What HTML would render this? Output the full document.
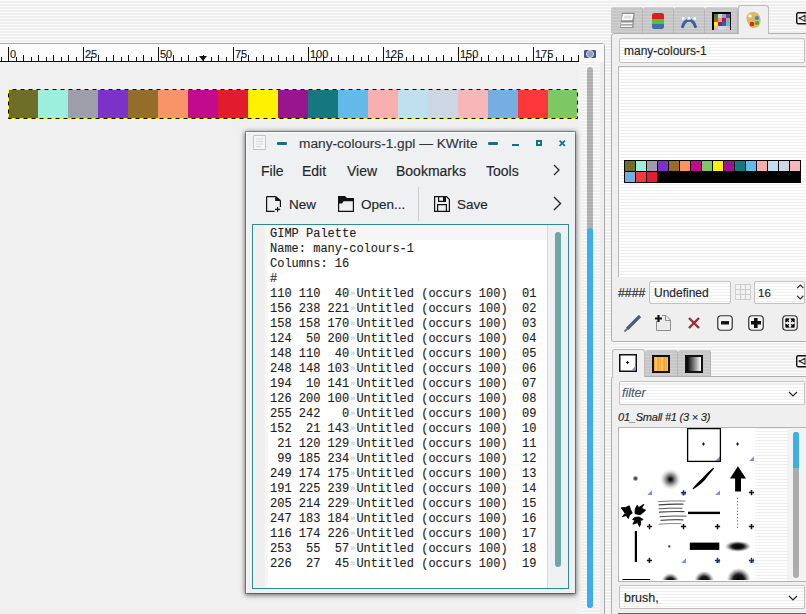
<!DOCTYPE html>
<html><head><meta charset="utf-8">
<style>
*{margin:0;padding:0;box-sizing:border-box}
html,body{width:806px;height:614px;overflow:hidden}
body{position:relative;font-family:"Liberation Sans",sans-serif;color:#232629;
background:repeating-linear-gradient(to bottom,#fbfbfb 0,#fbfbfb 1px,#efefef 1px,#efefef 3px);}
.a{position:absolute}
.t{position:absolute;white-space:nowrap;line-height:16px;-webkit-text-stroke:0.15px currentColor}
.stripew{background:repeating-linear-gradient(to bottom,#efefef 0,#efefef 1px,#ffffff 1px,#ffffff 3px)}
.mono{position:absolute;-webkit-text-stroke:0.12px #1f1c1b;font-family:"Liberation Mono",monospace;font-size:12px;white-space:pre;color:#1f1c1b;line-height:15px}
.ws{-webkit-text-stroke:0;color:#b8b8b8;font-size:9px;display:inline-block;width:7.2px;text-align:center;vertical-align:top;line-height:15px}
.tab{position:absolute;top:7px;height:26px;border-radius:3px 3px 0 0;background:repeating-linear-gradient(to bottom,#cfcfcf 0,#cfcfcf 1px,#c6c6c6 1px,#c6c6c6 3px);border-right:1px solid #b4b4b4}
</style></head><body>

<div class="a" style="left:-4px;top:43px;width:609px;height:580px;border:1px solid #a9a9a9;border-radius:3px"></div><div class="a" style="left:600px;top:62px;width:4px;height:560px;background:#eeeeee"></div><div class="a" style="left:579px;top:62px;width:3px;height:560px;background:#f3f3f3"></div>
<div class="a" style="left:579px;top:44px;width:25px;height:18px;background:#f8f8f8"></div>
<div class="a" style="left:0;top:44px;width:579px;height:18px;background:#fcfcfc;border-bottom:1px solid #111"></div>
<div class="a" style="left:1px;top:57px;width:1px;height:4px;background:#111"></div><div class="a" style="left:8px;top:47px;width:1px;height:14px;background:#111"></div><div class="a" style="left:16px;top:57px;width:1px;height:4px;background:#111"></div><div class="a" style="left:23px;top:55px;width:1px;height:6px;background:#111"></div><div class="a" style="left:31px;top:57px;width:1px;height:4px;background:#111"></div><div class="a" style="left:38px;top:55px;width:1px;height:6px;background:#111"></div><div class="a" style="left:46px;top:57px;width:1px;height:4px;background:#111"></div><div class="a" style="left:53px;top:55px;width:1px;height:6px;background:#111"></div><div class="a" style="left:61px;top:57px;width:1px;height:4px;background:#111"></div><div class="a" style="left:68px;top:55px;width:1px;height:6px;background:#111"></div><div class="a" style="left:76px;top:57px;width:1px;height:4px;background:#111"></div><div class="a" style="left:83px;top:47px;width:1px;height:14px;background:#111"></div><div class="a" style="left:91px;top:57px;width:1px;height:4px;background:#111"></div><div class="a" style="left:98px;top:55px;width:1px;height:6px;background:#111"></div><div class="a" style="left:106px;top:57px;width:1px;height:4px;background:#111"></div><div class="a" style="left:113px;top:55px;width:1px;height:6px;background:#111"></div><div class="a" style="left:121px;top:57px;width:1px;height:4px;background:#111"></div><div class="a" style="left:128px;top:55px;width:1px;height:6px;background:#111"></div><div class="a" style="left:136px;top:57px;width:1px;height:4px;background:#111"></div><div class="a" style="left:143px;top:55px;width:1px;height:6px;background:#111"></div><div class="a" style="left:151px;top:57px;width:1px;height:4px;background:#111"></div><div class="a" style="left:158px;top:47px;width:1px;height:14px;background:#111"></div><div class="a" style="left:166px;top:57px;width:1px;height:4px;background:#111"></div><div class="a" style="left:173px;top:55px;width:1px;height:6px;background:#111"></div><div class="a" style="left:181px;top:57px;width:1px;height:4px;background:#111"></div><div class="a" style="left:188px;top:55px;width:1px;height:6px;background:#111"></div><div class="a" style="left:196px;top:57px;width:1px;height:4px;background:#111"></div><div class="a" style="left:203px;top:55px;width:1px;height:6px;background:#111"></div><div class="a" style="left:211px;top:57px;width:1px;height:4px;background:#111"></div><div class="a" style="left:218px;top:55px;width:1px;height:6px;background:#111"></div><div class="a" style="left:226px;top:57px;width:1px;height:4px;background:#111"></div><div class="a" style="left:233px;top:47px;width:1px;height:14px;background:#111"></div><div class="a" style="left:241px;top:57px;width:1px;height:4px;background:#111"></div><div class="a" style="left:248px;top:55px;width:1px;height:6px;background:#111"></div><div class="a" style="left:256px;top:57px;width:1px;height:4px;background:#111"></div><div class="a" style="left:263px;top:55px;width:1px;height:6px;background:#111"></div><div class="a" style="left:271px;top:57px;width:1px;height:4px;background:#111"></div><div class="a" style="left:278px;top:55px;width:1px;height:6px;background:#111"></div><div class="a" style="left:286px;top:57px;width:1px;height:4px;background:#111"></div><div class="a" style="left:293px;top:55px;width:1px;height:6px;background:#111"></div><div class="a" style="left:301px;top:57px;width:1px;height:4px;background:#111"></div><div class="a" style="left:308px;top:47px;width:1px;height:14px;background:#111"></div><div class="a" style="left:316px;top:57px;width:1px;height:4px;background:#111"></div><div class="a" style="left:323px;top:55px;width:1px;height:6px;background:#111"></div><div class="a" style="left:331px;top:57px;width:1px;height:4px;background:#111"></div><div class="a" style="left:338px;top:55px;width:1px;height:6px;background:#111"></div><div class="a" style="left:346px;top:57px;width:1px;height:4px;background:#111"></div><div class="a" style="left:353px;top:55px;width:1px;height:6px;background:#111"></div><div class="a" style="left:361px;top:57px;width:1px;height:4px;background:#111"></div><div class="a" style="left:368px;top:55px;width:1px;height:6px;background:#111"></div><div class="a" style="left:376px;top:57px;width:1px;height:4px;background:#111"></div><div class="a" style="left:383px;top:47px;width:1px;height:14px;background:#111"></div><div class="a" style="left:391px;top:57px;width:1px;height:4px;background:#111"></div><div class="a" style="left:398px;top:55px;width:1px;height:6px;background:#111"></div><div class="a" style="left:406px;top:57px;width:1px;height:4px;background:#111"></div><div class="a" style="left:413px;top:55px;width:1px;height:6px;background:#111"></div><div class="a" style="left:421px;top:57px;width:1px;height:4px;background:#111"></div><div class="a" style="left:428px;top:55px;width:1px;height:6px;background:#111"></div><div class="a" style="left:436px;top:57px;width:1px;height:4px;background:#111"></div><div class="a" style="left:443px;top:55px;width:1px;height:6px;background:#111"></div><div class="a" style="left:451px;top:57px;width:1px;height:4px;background:#111"></div><div class="a" style="left:458px;top:47px;width:1px;height:14px;background:#111"></div><div class="a" style="left:466px;top:57px;width:1px;height:4px;background:#111"></div><div class="a" style="left:473px;top:55px;width:1px;height:6px;background:#111"></div><div class="a" style="left:481px;top:57px;width:1px;height:4px;background:#111"></div><div class="a" style="left:488px;top:55px;width:1px;height:6px;background:#111"></div><div class="a" style="left:496px;top:57px;width:1px;height:4px;background:#111"></div><div class="a" style="left:503px;top:55px;width:1px;height:6px;background:#111"></div><div class="a" style="left:511px;top:57px;width:1px;height:4px;background:#111"></div><div class="a" style="left:518px;top:55px;width:1px;height:6px;background:#111"></div><div class="a" style="left:526px;top:57px;width:1px;height:4px;background:#111"></div><div class="a" style="left:533px;top:47px;width:1px;height:14px;background:#111"></div><div class="a" style="left:541px;top:57px;width:1px;height:4px;background:#111"></div><div class="a" style="left:548px;top:55px;width:1px;height:6px;background:#111"></div><div class="a" style="left:556px;top:57px;width:1px;height:4px;background:#111"></div><div class="a" style="left:563px;top:55px;width:1px;height:6px;background:#111"></div><div class="a" style="left:571px;top:57px;width:1px;height:4px;background:#111"></div><div class="a" style="left:578px;top:55px;width:1px;height:6px;background:#111"></div>
<div class="t" style="left:10px;top:48px;font-size:11px;line-height:12px;color:#1a1a1a">0</div>
<div class="t" style="left:85px;top:48px;font-size:11px;line-height:12px;color:#1a1a1a">25</div>
<div class="t" style="left:160px;top:48px;font-size:11px;line-height:12px;color:#1a1a1a">50</div>
<div class="t" style="left:235px;top:48px;font-size:11px;line-height:12px;color:#1a1a1a">75</div>
<div class="t" style="left:310px;top:48px;font-size:11px;line-height:12px;color:#1a1a1a">100</div>
<div class="t" style="left:385px;top:48px;font-size:11px;line-height:12px;color:#1a1a1a">125</div>
<div class="t" style="left:460px;top:48px;font-size:11px;line-height:12px;color:#1a1a1a">150</div>
<div class="t" style="left:535px;top:48px;font-size:11px;line-height:12px;color:#1a1a1a">175</div>
<div class="a" style="left:199px;top:56px;width:0;height:0;border-left:4px solid transparent;border-right:4px solid transparent;border-top:5px solid #111"></div>
<div class="a" style="left:0;top:62px;width:579px;height:560px;background:#f0f0f0"></div>
<div class="a" style="left:584px;top:50px;width:12px;height:8px;background:#3a58a0;border-radius:1px"><div class="a" style="left:2px;top:0px;width:8px;height:8px;border-radius:50%;background:#a09aa8;border:1.5px solid #c8d6ec"></div></div>
<div class="a" style="left:587px;top:67px;width:6px;height:541px;background:rgba(0,0,0,0.27);border-radius:3px"></div>
<div class="a" style="left:587px;top:228px;width:6px;height:380px;background:#3daee9;border-radius:3px"></div>
<div class="a" style="left:8px;top:89px;width:30px;height:30px;background:#6e6e28"></div><div class="a" style="left:38px;top:89px;width:30px;height:30px;background:#9ceedd"></div><div class="a" style="left:68px;top:89px;width:30px;height:30px;background:#9e9eaa"></div><div class="a" style="left:98px;top:89px;width:30px;height:30px;background:#7c32c8"></div><div class="a" style="left:128px;top:89px;width:30px;height:30px;background:#946e28"></div><div class="a" style="left:158px;top:89px;width:30px;height:30px;background:#f89467"></div><div class="a" style="left:188px;top:89px;width:30px;height:30px;background:#c20a8d"></div><div class="a" style="left:218px;top:89px;width:30px;height:30px;background:#e21b2d"></div><div class="a" style="left:248px;top:89px;width:30px;height:30px;background:#fff200"></div><div class="a" style="left:278px;top:89px;width:30px;height:30px;background:#98158f"></div><div class="a" style="left:308px;top:89px;width:30px;height:30px;background:#157881"></div><div class="a" style="left:338px;top:89px;width:30px;height:30px;background:#63b9ea"></div><div class="a" style="left:368px;top:89px;width:30px;height:30px;background:#f9aeaf"></div><div class="a" style="left:398px;top:89px;width:30px;height:30px;background:#bfe1ef"></div><div class="a" style="left:428px;top:89px;width:30px;height:30px;background:#cdd6e5"></div><div class="a" style="left:458px;top:89px;width:30px;height:30px;background:#f7b7b8"></div><div class="a" style="left:488px;top:89px;width:30px;height:30px;background:#74aee2"></div><div class="a" style="left:518px;top:89px;width:30px;height:30px;background:#fd3739"></div><div class="a" style="left:548px;top:89px;width:30px;height:30px;background:#7ec864"></div>
<svg class="a" style="left:8px;top:89px" width="570" height="30"><rect x="0.5" y="0.5" width="569" height="29" fill="none" stroke="#ffff30" stroke-width="1"/><rect x="0.5" y="0.5" width="569" height="29" fill="none" stroke="#000" stroke-width="1" stroke-dasharray="4 4" stroke-dashoffset="4"/></svg>
<div class="a" style="left:246px;top:132px;width:329px;height:461px;background:#eff0f1;box-shadow:0 0 0 1px rgba(0,0,0,0.3),0 1px 5px 1px rgba(0,0,0,0.6)">
<div class="a" style="left:0;top:0;width:1px;height:461px;background:#fbfbfc"></div>
<div class="a" style="left:0;top:0;width:329px;height:1px;background:#fafafb"></div>
<div class="a" style="left:0;top:-1px;width:329px;height:462px">
<svg class="a" style="left:7px;top:4px" width="13" height="15"><path d="M0.5 0.5H12.5V14.5H0.5Z" fill="#f6f6f6" stroke="#c4c4c4"/><path d="M3 4H10M3 6.5H10M3 9H10M3 11.5H8" stroke="#d6d6d6"/></svg>
<div class="a" style="left:31px;top:11px;width:10px;height:3px;background:#19707e;border-radius:1px"></div>
<div class="t" style="left:53px;top:5px;font-size:13.7px;line-height:16px;color:#31363b">many-colours-1.gpl — KWrite</div>
<div class="a" style="left:242px;top:11px;width:10px;height:3px;background:#19707e;border-radius:1px"></div>
<div class="a" style="left:266px;top:13px;width:7px;height:2px;background:#19707e"></div>
<div class="a" style="left:290px;top:9px;width:6px;height:6px;border:2px solid #19707e"></div>
<svg class="a" style="left:313px;top:9px" width="7" height="7"><path d="M0.6 0.6L5.9 5.9M5.9 0.6L0.6 5.9" stroke="#19707e" stroke-width="1.7"/></svg>
<div class="t" style="left:15px;top:31px;font-size:14px;line-height:18px;color:#232629">File</div>
<div class="t" style="left:56px;top:31px;font-size:14px;line-height:18px;color:#232629">Edit</div>
<div class="t" style="left:101px;top:31px;font-size:14px;line-height:18px;color:#232629">View</div>
<div class="t" style="left:150px;top:31px;font-size:14px;line-height:18px;color:#232629">Bookmarks</div>
<div class="t" style="left:240px;top:31px;font-size:14px;line-height:18px;color:#232629">Tools</div>
<svg class="a" style="left:307px;top:33px" width="8" height="12"><path d="M1 1L6 6L1 11" fill="none" stroke="#232629" stroke-width="1.3"/></svg>
<svg class="a" style="left:20px;top:65px" width="16" height="17"><path d="M0.6 0.6H9.2M0.6 0.6V15.4H8.6M14.4 4.6V11" fill="none" stroke="#111" stroke-width="1.2"/><path d="M9.2 0H10L14.6 4V5H9.2Z" fill="#111"/><path d="M11.6 11V15.8M9 13.4H14.2" stroke="#111" stroke-width="1.2"/></svg>
<div class="t" style="left:43px;top:66px;font-size:13.5px;line-height:16px;color:#232629">New</div>
<svg class="a" style="left:92px;top:65px" width="17" height="17"><path d="M0 0H7L9 2H16V16H0Z" fill="#111"/><path d="M1.2 7.4H4L5.6 5.2H14.8V14.8H1.2Z" fill="#eff0f1"/></svg>
<div class="t" style="left:115px;top:66px;font-size:13.5px;line-height:16px;color:#232629">Open...</div>
<div class="a" style="left:172px;top:56px;width:1px;height:34px;background:#c9cbcd"></div>
<svg class="a" style="left:188px;top:65px" width="17" height="17"><path d="M0.6 0.6H12.6L15.4 3.6V15.4H0.6Z" fill="none" stroke="#111" stroke-width="1.2"/><path d="M4.6 0.6V5.4H11.4V0.6M3.6 15.4V8.6H12.4V15.4" fill="none" stroke="#111" stroke-width="1.2"/><rect x="9" y="0.6" width="2.6" height="4.8" fill="#111"/></svg>
<div class="t" style="left:211px;top:66px;font-size:13.5px;line-height:16px;color:#232629">Save</div>
<svg class="a" style="left:307px;top:65px" width="9" height="15"><path d="M1 1L7.5 7.5L1 14" fill="none" stroke="#232629" stroke-width="1.4"/></svg>
<div class="a" style="left:6px;top:93px;width:317px;height:365px;border:1px solid #2f8b8d;background:#fff;overflow:hidden">
<div class="a" style="left:0;top:0;width:15px;height:363px;background:linear-gradient(to right,#fcfdfd 0,#fcfdfd 1px,#efefef 1px,#efefef 12px,#f6f6f6 12px)"></div>
<div class="a" style="left:15px;top:0;width:279px;height:15px;background:#f6f6f6"></div>
<div class="a" style="left:294px;top:0;width:21px;height:363px;background:#eff0f1;border-left:1px solid #dadada"></div>
<div class="a" style="left:302px;top:7px;width:6px;height:335px;background:#69a8a5;border-radius:3px"></div>
<div class="mono" style="left:17px;top:2px">GIMP Palette</div><div class="mono" style="left:17px;top:17px">Name: many-colours-1</div><div class="mono" style="left:17px;top:32px">Columns: 16</div><div class="mono" style="left:17px;top:47px">#</div><div class="mono" style="left:17px;top:62px">110 110  40<span class="ws">»</span>Untitled (occurs 100)  01</div><div class="mono" style="left:17px;top:77px">156 238 221<span class="ws">»</span>Untitled (occurs 100)  02</div><div class="mono" style="left:17px;top:92px">158 158 170<span class="ws">»</span>Untitled (occurs 100)  03</div><div class="mono" style="left:17px;top:107px">124  50 200<span class="ws">»</span>Untitled (occurs 100)  04</div><div class="mono" style="left:17px;top:122px">148 110  40<span class="ws">»</span>Untitled (occurs 100)  05</div><div class="mono" style="left:17px;top:137px">248 148 103<span class="ws">»</span>Untitled (occurs 100)  06</div><div class="mono" style="left:17px;top:152px">194  10 141<span class="ws">»</span>Untitled (occurs 100)  07</div><div class="mono" style="left:17px;top:167px">126 200 100<span class="ws">»</span>Untitled (occurs 100)  08</div><div class="mono" style="left:17px;top:182px">255 242   0<span class="ws">»</span>Untitled (occurs 100)  09</div><div class="mono" style="left:17px;top:197px">152  21 143<span class="ws">»</span>Untitled (occurs 100)  10</div><div class="mono" style="left:17px;top:212px"> 21 120 129<span class="ws">»</span>Untitled (occurs 100)  11</div><div class="mono" style="left:17px;top:227px"> 99 185 234<span class="ws">»</span>Untitled (occurs 100)  12</div><div class="mono" style="left:17px;top:242px">249 174 175<span class="ws">»</span>Untitled (occurs 100)  13</div><div class="mono" style="left:17px;top:257px">191 225 239<span class="ws">»</span>Untitled (occurs 100)  14</div><div class="mono" style="left:17px;top:272px">205 214 229<span class="ws">»</span>Untitled (occurs 100)  15</div><div class="mono" style="left:17px;top:287px">247 183 184<span class="ws">»</span>Untitled (occurs 100)  16</div><div class="mono" style="left:17px;top:302px">116 174 226<span class="ws">»</span>Untitled (occurs 100)  17</div><div class="mono" style="left:17px;top:317px">253  55  57<span class="ws">»</span>Untitled (occurs 100)  18</div><div class="mono" style="left:17px;top:332px">226  27  45<span class="ws">»</span>Untitled (occurs 100)  19</div>
</div>
</div>
</div>
<div class="a" style="left:611px;top:33px;width:200px;height:309px;border:1px solid #b0b0b0;border-radius:3px;background:#efefef"></div>
<div class="tab" style="left:611px;width:32px"></div>
<div class="tab" style="left:643px;width:31px"></div>
<div class="tab" style="left:674px;width:31px"></div>
<div class="tab" style="left:705px;width:33px"></div>
<div class="a" style="left:738px;top:5px;width:31px;height:29px;background:#efefef;border:1px solid #bdbdbd;border-bottom:0;border-radius:3px 3px 0 0"></div>
<svg class="a" style="left:617px;top:12px" width="20" height="18"><path d="M5 0.8H17.8L16.4 16H3.2Z" fill="#8e8e8e"/><path d="M5.9 2H16.6L15.2 8.2H4.5Z" fill="#fbfbfb"/><path d="M7.5 3.6H14.6L13.9 6.6H6.8Z" fill="#e0e0e0"/><path d="M4.3 10.4H15.6L15.4 12.2H4.1Z" fill="#f8f8f8"/><path d="M4 13.4H15.3L15.1 15H3.8Z" fill="#f8f8f8"/></svg>
<div class="a" style="left:652px;top:13px;width:12px;height:16px;border-radius:3px/2px;background:linear-gradient(#e01b1b 0,#e01b1b 35%,#55c03a 35%,#55c03a 66%,#3e6fb0 66%)"></div>
<svg class="a" style="left:678px;top:13px" width="22" height="17"><path d="M4.6 13.6C6 9 8.5 7.2 11 7.2C13.5 7.2 16 9 17.4 13.6" fill="none" stroke="#3a5f9c" stroke-width="3" stroke-linecap="round"/><rect x="3.6" y="3.6" width="3.4" height="3.4" fill="#fff" stroke="#b8c4d8" stroke-width="0.7"/><rect x="9.3" y="3.3" width="3.4" height="3.4" fill="#fff" stroke="#b8c4d8" stroke-width="0.7"/><rect x="15" y="3.6" width="3.4" height="3.4" fill="#fff" stroke="#b8c4d8" stroke-width="0.7"/></svg>
<div class="a" style="left:712px;top:12px;width:19px;height:18px;background:#000"><div class="a" style="left:2px;top:2px;width:4px;height:4px;background:#6e6e28"></div><div class="a" style="left:6px;top:2px;width:4px;height:4px;background:#9ceedd"></div><div class="a" style="left:10px;top:2px;width:4px;height:4px;background:#9e9eaa"></div><div class="a" style="left:14px;top:2px;width:4px;height:4px;background:#7c32c8"></div><div class="a" style="left:2px;top:6px;width:4px;height:4px;background:#946e28"></div><div class="a" style="left:6px;top:6px;width:4px;height:4px;background:#f89467"></div><div class="a" style="left:10px;top:6px;width:4px;height:4px;background:#c20a8d"></div><div class="a" style="left:14px;top:6px;width:4px;height:4px;background:#7ec864"></div><div class="a" style="left:2px;top:10px;width:4px;height:4px;background:#fff200"></div><div class="a" style="left:6px;top:10px;width:4px;height:4px;background:#98158f"></div><div class="a" style="left:10px;top:10px;width:4px;height:4px;background:#157881"></div><div class="a" style="left:14px;top:10px;width:4px;height:4px;background:#63b9ea"></div><div class="a" style="left:2px;top:14px;width:4px;height:4px;background:#f9aeaf"></div><div class="a" style="left:6px;top:14px;width:4px;height:4px;background:#bfe1ef"></div><div class="a" style="left:10px;top:14px;width:4px;height:4px;background:#cdd6e5"></div><div class="a" style="left:14px;top:14px;width:4px;height:4px;background:#f7b7b8"></div></div>
<svg class="a" style="left:745px;top:11px" width="17" height="18"><path d="M8 1C3.5 1 1 4 1.5 8C2 11 4 13 4.5 15C5 17 8 17.5 11 16.5C14.5 15.5 16 12 15.5 8C15 3.5 12 1 8 1Z" fill="#dcb860"/><circle cx="5" cy="5" r="1.8" fill="#f8f4e8"/><circle cx="12" cy="7" r="2.1" fill="#3a86d4"/><circle cx="7" cy="13" r="2.3" fill="#e02424"/><circle cx="12" cy="12" r="2.1" fill="#46b030"/></svg>
<svg class="a" style="left:796px;top:12px" width="12" height="13"><rect x="0.7" y="0.7" width="14" height="11" rx="1.5" fill="#f4f4f4" stroke="#111" stroke-width="1.4"/><path d="M3.6 6.2L9 3.2V9.2Z" fill="none" stroke="#333" stroke-width="1.1" stroke-linejoin="round"/><circle cx="3.6" cy="6.2" r="1.1" fill="#333"/></svg>
<div class="a stripew" style="left:619px;top:38px;width:186px;height:25px;background-position:0 2px;border:1px solid #c2c2c2;border-radius:2px"></div>
<div class="t" style="left:624px;top:43px;font-size:12px;line-height:16px;color:#232629">many-colours-1</div>
<div class="a stripew" style="left:618px;top:66px;width:192px;height:211px;background-position:0 0;border-left:1px solid #b8b8b8;border-top:1px solid #b8b8b8"></div>
<div class="a" style="left:624px;top:160px;width:177px;height:23px;background:#000"></div>
<div class="a" style="left:625px;top:161px;width:10px;height:10px;background:#6e6e28"></div><div class="a" style="left:636px;top:161px;width:10px;height:10px;background:#9ceedd"></div><div class="a" style="left:647px;top:161px;width:10px;height:10px;background:#9e9eaa"></div><div class="a" style="left:658px;top:161px;width:10px;height:10px;background:#7c32c8"></div><div class="a" style="left:669px;top:161px;width:10px;height:10px;background:#946e28"></div><div class="a" style="left:680px;top:161px;width:10px;height:10px;background:#f89467"></div><div class="a" style="left:691px;top:161px;width:10px;height:10px;background:#c20a8d"></div><div class="a" style="left:702px;top:161px;width:10px;height:10px;background:#7ec864"></div><div class="a" style="left:713px;top:161px;width:10px;height:10px;background:#fff200"></div><div class="a" style="left:724px;top:161px;width:10px;height:10px;background:#98158f"></div><div class="a" style="left:735px;top:161px;width:10px;height:10px;background:#157881"></div><div class="a" style="left:746px;top:161px;width:10px;height:10px;background:#63b9ea"></div><div class="a" style="left:757px;top:161px;width:10px;height:10px;background:#f9aeaf"></div><div class="a" style="left:768px;top:161px;width:10px;height:10px;background:#bfe1ef"></div><div class="a" style="left:779px;top:161px;width:10px;height:10px;background:#cdd6e5"></div><div class="a" style="left:790px;top:161px;width:10px;height:10px;background:#f7b7b8"></div><div class="a" style="left:625px;top:172px;width:10px;height:10px;background:#74aee2"></div><div class="a" style="left:636px;top:172px;width:10px;height:10px;background:#fd3739"></div><div class="a" style="left:647px;top:172px;width:10px;height:10px;background:#e21b2d"></div>
<div class="t" style="left:618px;top:285px;font-size:12.3px;line-height:16px;color:#232629">####</div>
<div class="a stripew" style="left:649px;top:281px;width:82px;height:23px;background-position:0 1px;border:1px solid #c2c2c2;border-radius:2px"></div>
<div class="t" style="left:654px;top:285px;font-size:12px;line-height:16px;color:#232629">Undefined</div>
<svg class="a" style="left:735px;top:284px" width="16" height="16"><path d="M0.5 0.5H15.5V15.5H0.5ZM5.5 0.5V15.5M10.5 0.5V15.5M0.5 5.5H15.5M0.5 10.5H15.5" fill="#f2f2f2" stroke="#cdcdcd"/></svg>
<div class="a stripew" style="left:754px;top:281px;width:51px;height:23px;background-position:0 1px;border:1px solid #c2c2c2;border-radius:2px"></div>
<div class="t" style="left:758px;top:285px;font-size:11.5px;line-height:16px;color:#232629">16</div>
<svg class="a" style="left:796px;top:284px" width="9" height="17"><path d="M1.2 4.2L4.3 1.1L7.4 4.2M1.2 11.8L4.3 14.9L7.4 11.8" fill="none" stroke="#232629" stroke-width="1.2"/></svg>
<svg class="a" style="left:623px;top:314px" width="19" height="19"><path d="M17 2L4 15" stroke="#4f5c78" stroke-width="3.2"/><path d="M4 15L1.5 17.5" stroke="#777" stroke-width="2"/></svg>
<svg class="a" style="left:654px;top:314px" width="18" height="18"><path d="M2.5 7V16.5H16.5V6L12 1.5H8" fill="#ebebeb" stroke="#8e8e8e"/><path d="M11.5 1.5V6.5H16.5" fill="none" stroke="#8e8e8e"/><path d="M4.5 1V8M1 4.5H8" stroke="#111" stroke-width="2.2"/></svg>
<svg class="a" style="left:688px;top:317px" width="12" height="12"><path d="M1 1L11 11M11 1L1 11" stroke="#963035" stroke-width="2.4"/></svg>
<svg class="a" style="left:717px;top:315px" width="16" height="16"><rect x="0.75" y="0.75" width="14.5" height="14.5" rx="3.2" fill="#f2f2f2" stroke="#333" stroke-width="1.2"/><path d="M4 7.8H12" stroke="#111" stroke-width="3.4"/></svg>
<svg class="a" style="left:748px;top:315px" width="16" height="16"><rect x="0.75" y="0.75" width="14.5" height="14.5" rx="3.2" fill="#f2f2f2" stroke="#333" stroke-width="1.2"/><path d="M3 7.8H13M7.8 3V13" stroke="#111" stroke-width="3.6"/></svg>
<svg class="a" style="left:782px;top:315px" width="16" height="16"><rect x="0.75" y="0.75" width="14.5" height="14.5" rx="3.2" fill="#f2f2f2" stroke="#333" stroke-width="1.2"/><path d="M3.8 3.8H7.2L3.8 7.2ZM12.2 3.8H8.8L12.2 7.2ZM3.8 12.2H7.2L3.8 8.8ZM12.2 12.2H8.8L12.2 8.8Z" fill="#111" stroke="#111" stroke-width="0.9" stroke-linejoin="round"/><path d="M5 5L6.8 6.8M11 5L9.2 6.8M5 11L6.8 9.2M11 11L9.2 9.2" stroke="#111" stroke-width="1.4"/></svg>
<div class="a" style="left:611px;top:376px;width:200px;height:250px;border:1px solid #b0b0b0;border-radius:3px;background:#efefef"></div>
<div class="tab" style="left:645px;top:350px;width:33px;"></div>
<div class="tab" style="left:678px;top:350px;width:33px;"></div>
<div class="a" style="left:612px;top:349px;width:33px;height:28px;background:#efefef;border:1px solid #bdbdbd;border-bottom:0;border-radius:3px 3px 0 0"></div>
<svg class="a" style="left:619px;top:354px" width="18" height="18"><rect x="0.75" y="0.75" width="16.5" height="16.5" fill="#fff" stroke="#111" stroke-width="1.5"/><path d="M12.5 16.5H16.5V12Z" fill="#7c8cf0"/><path d="M8.5 7V10M7 8.5H10" stroke="#111" stroke-width="1"/></svg>
<div class="a" style="left:652px;top:355px;width:18px;height:18px;border:2px solid #111;background:repeating-linear-gradient(to right,#f0a030 0,#ffcf70 2px,#f0a030 4px,#ffb84a 6px)"></div>
<div class="a" style="left:685px;top:355px;width:18px;height:18px;border:2px solid #111;background:linear-gradient(to right,#000,#fff)"></div>
<svg class="a" style="left:796px;top:355px" width="12" height="13"><rect x="0.7" y="0.7" width="14" height="11" rx="1.5" fill="#f4f4f4" stroke="#111" stroke-width="1.4"/><path d="M3.6 6.2L9 3.2V9.2Z" fill="none" stroke="#333" stroke-width="1.1" stroke-linejoin="round"/><circle cx="3.6" cy="6.2" r="1.1" fill="#333"/></svg>
<div class="a stripew" style="left:619px;top:381px;width:186px;height:24px;background-position:0 2px;border:1px solid #c2c2c2;border-radius:2px"></div>
<div class="t" style="left:622px;top:385px;font-size:12.5px;line-height:16px;font-style:italic;color:#4f5a70">filter</div>
<svg class="a" style="left:788px;top:391px" width="10" height="6"><path d="M1 1L5 5L9 1" fill="none" stroke="#232629" stroke-width="1.2"/></svg>
<div class="t" style="left:618px;top:409px;font-size:11px;line-height:16px;font-style:italic;letter-spacing:-0.22px;color:#232629">01_Small #1 (3 × 3)</div>
<div class="a" style="left:618px;top:427px;width:192px;height:155px;border:1px solid #b4b4b4"></div>
<div class="a stripew" style="left:619px;top:428px;width:169px;height:153px;background-position:0 0"></div>
<div class="a" style="left:619px;top:428px;width:136px;height:153px;background:#fff"></div>
<div class="a" style="left:787px;top:428px;width:19px;height:153px;background:#f3f3f3"></div>
<div class="a" style="left:793px;top:432px;width:6px;height:146px;background:#acacac;border-radius:3px"></div>
<div class="a" style="left:793px;top:432px;width:6px;height:36px;background:#3daee9;border-radius:3px 3px 0 0"></div>
<svg class="a" style="left:619px;top:428px" width="136" height="152">
<defs>
<radialGradient id="g1"><stop offset="0" stop-color="#000" stop-opacity="1"/><stop offset="0.35" stop-color="#000" stop-opacity="0.85"/><stop offset="1" stop-color="#000" stop-opacity="0"/></radialGradient>
<radialGradient id="g2"><stop offset="0" stop-color="#000" stop-opacity="1"/><stop offset="0.12" stop-color="#000" stop-opacity="0.9"/><stop offset="0.45" stop-color="#000" stop-opacity="0.45"/><stop offset="0.75" stop-color="#000" stop-opacity="0.12"/><stop offset="1" stop-color="#000" stop-opacity="0"/></radialGradient>
<radialGradient id="g3"><stop offset="0" stop-color="#000" stop-opacity="1"/><stop offset="0.45" stop-color="#000" stop-opacity="0.9"/><stop offset="0.8" stop-color="#000" stop-opacity="0.25"/><stop offset="1" stop-color="#000" stop-opacity="0"/></radialGradient>
</defs>
<path d="M96.2 33.0H101.0V28.2Z" fill="#7b8cf2"/>
<path d="M130.2 33.0H135.0V28.2Z" fill="#7b8cf2"/>
<path d="M28.2 67.0H33.0V62.2Z" fill="#7b8cf2"/>
<path d="M62.2 67.0H67.0V62.2Z" fill="#7b8cf2"/>
<path d="M96.2 67.0H101.0V62.2Z" fill="#7b8cf2"/>
<path d="M62.2 135.0H67.0V130.2Z" fill="#7b8cf2"/>
<path d="M96.2 135.0H101.0V130.2Z" fill="#7b8cf2"/>
<path d="M130.2 135.0H135.0V130.2Z" fill="#7b8cf2"/>
<rect x="68.6" y="0.6" width="32.8" height="32.8" fill="none" stroke="#000" stroke-width="1.3"/>
<path d="M84.5 14.5V17.5M83 16H86" stroke="#111" stroke-width="1"/>
<path d="M118.5 14.5V17.5M117 16H120" stroke="#111" stroke-width="1"/>
<circle cx="16.5" cy="50.5" r="3" fill="url(#g1)" opacity="0.8"/>
<circle cx="51.5" cy="51.3" r="10.5" fill="url(#g2)"/>
<path d="M74.3 60.6C79 55 81 53 84 50.5C88 46 91 43 94.6 40.3C91 44 89 47 86 51C83 55 79 57.5 74.3 60.6Z" fill="#000" stroke="#000" stroke-width="1.2" stroke-linejoin="round"/>
<path d="M118.9 38.2L111 50.5H116.1V63.5H122V50.5H127Z" fill="#000"/>
<g fill="#000" stroke="#000" stroke-width="0.9" stroke-linejoin="round"><path d="M2.2 79.8L6.5 79.5L10.3 77.8L11.5 81.5L13.2 85.2L10.5 87L9.3 90.6L7.2 87.6L3.4 88.6L6.2 85.3Z"/><path d="M24.9 76.2L22.6 80.2L26.6 82.2L21.5 86.7L16.1 85.7L16.2 81.2L18.2 77.2L19.8 79.6Z"/><path d="M20.5 98.6L18.6 94.6L13.9 96.2L15.9 92.4L13.6 91.4L16.1 89.3L20.2 89.1L24.2 91.6L21.2 92.6L21.8 95.5Z"/></g>
<g stroke="#111" fill="none" stroke-linecap="round"><path d="M39.5 73.6Q52.8 72.6 66.0 73.0" stroke-width="1.0" stroke-opacity="0.55"/><path d="M40.0 76.8Q52.0 75.8 64.0 76.2" stroke-width="1.3" stroke-opacity="0.80"/><path d="M40.0 80.8Q51.5 79.8 63.0 80.2" stroke-width="1.0" stroke-opacity="0.70"/><path d="M40.5 84.2Q52.8 83.2 65.0 83.6" stroke-width="1.2" stroke-opacity="0.80"/><path d="M41.0 88.7Q54.0 87.7 67.0 88.1" stroke-width="1.0" stroke-opacity="0.75"/><path d="M42.0 92.4Q53.0 91.4 64.0 91.8" stroke-width="1.2" stroke-opacity="0.70"/><path d="M40.0 96.2Q51.0 95.2 62.0 95.6" stroke-width="0.9" stroke-opacity="0.55"/></g>
<path d="M69 84.9H101" stroke="#000" stroke-width="2.4"/>
<path d="M118.5 70V101" stroke="#444" stroke-width="1" stroke-dasharray="1 2.2"/>
<path d="M16.9 103V134" stroke="#000" stroke-width="2.2"/>
<rect x="49.3" y="117.4" width="2" height="2" fill="#333"/>
<rect x="70.8" y="114.6" width="29.5" height="7.3" fill="#000"/>
<ellipse cx="118.9" cy="118.4" rx="13" ry="5.5" fill="url(#g3)"/>
<path d="M3.4 152H31.2" stroke="#000" stroke-width="2"/>
<circle cx="51.4" cy="154" r="9" fill="url(#g3)"/>
<circle cx="85.2" cy="153" r="10" fill="url(#g3)"/>
<circle cx="119.7" cy="152" r="12" fill="url(#g3)"/>
<path d="M64.5 62.2V67.4M61.9 64.8H67.1" stroke="#1a2a70" stroke-width="1.5"/>
<path d="M132.5 62.0V67.2M129.9 64.6H135.1" stroke="#111" stroke-width="1.5"/>
<path d="M30.5 96.0V101.2M27.9 98.6H33.1" stroke="#301010" stroke-width="1.5"/>
<path d="M64.5 96.0V101.2M61.9 98.6H67.1" stroke="#111" stroke-width="1.5"/>
<path d="M98.5 96.0V101.2M95.9 98.6H101.1" stroke="#111" stroke-width="1.5"/>
<path d="M132.5 96.0V101.2M129.9 98.6H135.1" stroke="#111" stroke-width="1.5"/>
<path d="M30.4 129.8V135.0M27.8 132.4H33.0" stroke="#111" stroke-width="1.5"/>
<path d="M98.5 129.8V135.0M95.9 132.4H101.1" stroke="#1a2a70" stroke-width="1.5"/>
<path d="M132.5 129.8V135.0M129.9 132.4H135.1" stroke="#1a2a70" stroke-width="1.5"/>
</svg>
<div class="a stripew" style="left:619px;top:585px;width:186px;height:24px;background-position:0 2px;border:1px solid #c2c2c2;border-radius:2px"></div>
<div class="t" style="left:624px;top:590px;font-size:12.5px;line-height:16px;color:#232629">brush,</div>
<svg class="a" style="left:788px;top:595px" width="10" height="6"><path d="M1 1L5 5L9 1" fill="none" stroke="#232629" stroke-width="1.2"/></svg>
<div class="a" style="left:618px;top:613px;width:192px;height:2px;background:#666"></div>
</body></html>
